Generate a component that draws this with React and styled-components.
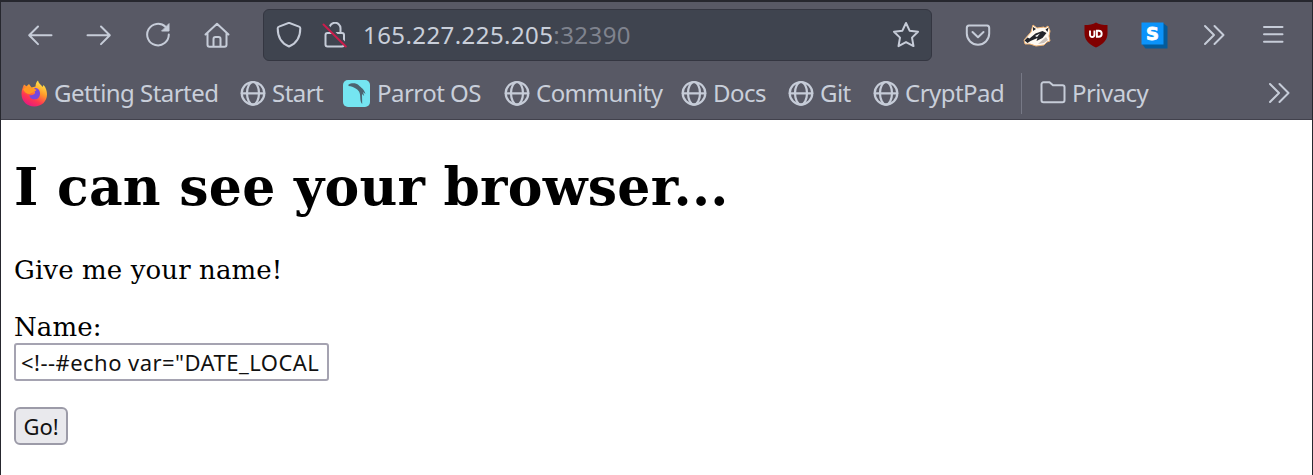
import React from "react";
import styled, { createGlobalStyle } from "styled-components";

const GlobalStyle = createGlobalStyle`
  * { box-sizing: border-box; }
  html, body { margin: 0; padding: 0; background: #fff; overflow: hidden; }
`;

const Window = styled.div`
  width: 1313px;
  height: 475px;
  border: 1px solid #26272e;
  border-top-width: 2px;
  border-bottom: 0;
  background: #fff;
`;

const Chrome = styled.header`
  height: 118px;
  background: #585965;
  border-bottom: 1px solid #41414c;
  color: #c9cfda;
  font-family: "Noto Sans", "Open Sans", sans-serif;
`;

const NavBar = styled.nav`
  display: flex;
  align-items: center;
  height: 66px;
  padding-left: 9px;
`;

const NavButton = styled.span`
  display: flex;
  align-items: center;
  justify-content: center;
  flex: none;
  width: 59px;
  height: 52px;
`;

const AddressBar = styled.div`
  display: flex;
  align-items: center;
  flex: none;
  width: 669px;
  height: 52px;
  margin: 0 16px 0 17px;
  padding: 0 11px 0 12px;
  border: 1px solid #343641;
  border-radius: 6px;
  background: #3f444f;
`;

const LockSlot = styled.span`
  display: flex;
  flex: none;
  margin-left: 20px;
`;

const Address = styled.span`
  flex: 1;
  margin-left: 15px;
  font-size: 24px;
  line-height: 34px;
  letter-spacing: 0.42px;
  white-space: nowrap;
`;

const Port = styled.span`
  color: #7f838e;
`;

const Bookmarks = styled.nav`
  display: flex;
  align-items: center;
  height: 50px;
  padding: 0 21px 0 20px;
`;

const Bookmark = styled.span`
  display: flex;
  align-items: center;
  flex: none;
  gap: ${(p) => p.$gap || 6}px;
  width: ${(p) => p.$width}px;
`;

const BookmarkLabel = styled.span`
  font-size: 24px;
  line-height: 34px;
  letter-spacing: -0.54px;
  white-space: nowrap;
`;

const Divider = styled.span`
  flex: none;
  width: 1px;
  height: 41px;
  margin-right: 18px;
  background: #777986;
`;

const Spacer = styled.span`
  flex: 1;
`;

const Page = styled.main`
  padding: 0 13px;
  color: #000;
  font-family: "DejaVu Serif", serif;
  font-size: 26px;
  line-height: 30px;
  letter-spacing: 0.12px;
`;

const Title = styled.h1`
  margin: 0;
  padding-top: 37px;
  font-size: 52px;
  line-height: 60px;
  font-weight: bold;
  letter-spacing: 0.27px;
`;

const Prompt = styled.p`
  margin: 38px 0 0;
`;

const Form = styled.form`
  display: flex;
  flex-direction: column;
  align-items: flex-start;
  margin-top: 27px;
`;

const NameInput = styled.input`
  width: 315px;
  height: 38px;
  margin-top: 1px;
  padding: 0 5px;
  border: 2px solid #a5a3b1;
  border-radius: 3px;
  background: #fff;
  color: #111;
  font: 22px "Noto Sans", sans-serif;
  letter-spacing: 0.46px;
  outline: none;
`;

const GoButton = styled.button`
  width: 54px;
  height: 38px;
  margin-top: 26px;
  padding: 0;
  border: 2px solid #9c9ba8;
  border-radius: 6px;
  background: #e9e9ed;
  color: #111;
  font: 22px "Noto Sans", sans-serif;
`;

const Line = ({ w = 26, h = 26, sw = 2, children }) => (
  <svg width={w} height={h} viewBox={`0 0 ${w} ${h}`} fill="none" stroke="#c6ccd8" strokeWidth={sw} strokeLinecap="round" strokeLinejoin="round">
    {children}
  </svg>
);

const Back = () => <Line><path d="M24.5 13.3H2.500M11 4.500L2.200 13.300l8.800 8.800" /></Line>;
const Forward = () => <Line><path d="M1.5 13.3H23.500M15 4.500l8.800 8.800-8.800 8.800" /></Line>;
const Reload = () => (
  <Line>
    <path d="M20.500 4.800A10.800 10.800 0 1 0 23.800 12.500" />
    <path d="M24 2v7h-7z" fill="#c6ccd8" strokeWidth="1" />
  </Line>
);
const Home = () => (
  <Line>
    <path d="M1.500 12.500L13 1.800 24.500 12.500M3.500 11V22.700a2 2 0 0 0 2 2h15a2 2 0 0 0 2-2V11M9.500 24.500v-7.500a2 2 0 0 1 2-2h3a2 2 0 0 1 2 2v7.500" />
  </Line>
);
const Shield = () => (
  <Line><path d="M13 .8L23 4.600c.8.3 1.300.9 1.300 1.700C24.300 15.500 20.500 21.500 13 24.500 5.500 21.500 1.700 15.500 1.700 6.300c0-.8.4-1.400 1.300-1.700z" /></Line>
);
const Lock = () => (
  <Line>
    <path d="M7.500 6.500a5.500 5.500 0 0 1 11-.5v5" />
    <rect x="3.500" y="11" width="18.500" height="13.500" rx="2" />
    <path d="M3.500 2L25 23.500" stroke="#3f444f" strokeWidth="3" />
    <path d="M1.500 2.500L23.800 24.500" stroke="#cb1c4b" />
  </Line>
);
const Star = () => (
  <Line w={28} h={28}>
    <path d="M14 2l3.600 7.700 8.400 1.100-6 5.800 1.500 8.500-7.500-4-7.500 4 1.500-8.500-6-5.800 8.400-1.100z" />
  </Line>
);
const Pocket = () => (
  <Line>
    <path d="M4 3.500h18a2.500 2.500 0 0 1 2.200 2.500v5.500a11.200 11.200 0 0 1-22.400 0V6A2.500 2.500 0 0 1 4 3.500z" />
    <path d="M7.500 10L13 15.300l5.500-5.300" />
  </Line>
);
const Chevrons = () => (
  <Line w={24} h={24}><path d="M3 3l9 9-9 9M12.500 3l9 9-9 9" /></Line>
);
const Menu = () => <Line><path d="M4 5h18.500M4 12.300h18.500M4 19.700h18.500" /></Line>;
const Globe = () => (
  <Line sw={2.2}>
    <circle cx="13" cy="13.300" r="11.300" />
    <ellipse cx="13" cy="13.300" rx="6" ry="11.300" />
    <path d="M1.700 13.300h22.600" />
  </Line>
);
const Folder = () => (
  <Line>
    <path d="M1.500 20.300v-16a2 2 0 0 1 2-2h6l3.500 3h9.500a2 2 0 0 1 2 2v13a2 2 0 0 1-2 2h-19a2 2 0 0 1-2-2z" />
  </Line>
);
const Firefox = () => (
  <svg width="27" height="27" viewBox="0 0 27 27">
    <defs>
      <linearGradient id="flame" x1="0.8" y1="0" x2="0.25" y2="1">
        <stop offset="0" stopColor="#fff44f" />
        <stop offset=".4" stopColor="#ff9a2a" />
        <stop offset=".7" stopColor="#ff3750" />
        <stop offset="1" stopColor="#e31587" />
      </linearGradient>
    </defs>
    <path d="M3 4.500l2.500 1.700L8 4l2.500 3.500 4-1c0-2.500 1-4.800 2.500-6C17.500 3.500 20 4.500 21.500 7L22.500 5c2.500 2.500 3.500 6 3.500 9.500C26 21.500 20.500 26.500 13.300 26.500S.5 21 .5 14c0-4 1.200-6.500 2.500-9.500z" fill="url(#flame)" />
    <path d="M13.500 8c3.500 0 5.500 2 5.500 5.500s-2 5.800-5.500 5.800S8.500 17 8.500 15c1.500.6 3 .4 4.500-.8 1-.7 1.500-2 .5-3z" fill="#7647dd" />
    <path d="M2 9C5 6 10 6.500 12 8.500l3.500 1.300c-.5 1.700-3 1.700-4 2.700L8.500 14C6 14 3 12 2 9z" fill="#ff9822" />
  </svg>
);
const Parrot = () => (
  <svg width="27" height="27" viewBox="0 0 27 27">
    <rect width="27" height="27" rx="5" fill="#75e5f1" />
    <path d="M5.500 4.500c3-2 8-1.500 10 .5 2.500 2.500 5.500 4 7 9l-2.500-2 1.200 4-2.200-2 .2 10c-3-3-1-9-3.200-12.500C14.500 9.500 11 6.500 5.500 6z" fill="#4c6470" />
  </svg>
);
const Badger = () => (
  <svg width="28" height="24" viewBox="0 0 28 24">
    <path d="M1 17L8 9l2-7 4 3 7-1 1 1 3-2 2 5-1 5 1 5-3 1-3 3-8 1-6-2H2z" fill="#fffaf2" stroke="#eeb272" strokeWidth="1" />
    <path d="M1.500 17.500l3-3 2 1 6-5 7-2.500 4 2-4 5-6 3 1-3-7 3-3 2zM10 4l3 2-3 2zM22.500 6.500l3-2-1 4.500z" fill="#22242a" />
    <path d="M12 13l5-2.500-3 3.500z" fill="#fff" />
    <path d="M15 21l8-7 2 3-4 3z" fill="#c9c0b9" />
  </svg>
);
const UBlock = () => (
  <svg width="24" height="26" viewBox="0 0 24 26">
    <path d="M12 .5c3 2 7 2.500 11.500 2.500v8c0 7-4 11-11.500 14.500C4.500 22 .5 18 .5 11V3C5 3 9 2.500 12 .5z" fill="#800000" />
    <path d="M6 8.500v4.300a2.200 2.200 0 0 0 4.400 0V8.500M12.900 8.800v6h1.800a3 3 0 0 0 0-6z" fill="none" stroke="#fff" strokeWidth="1.900" />
  </svg>
);
const Stylus = () => (
  <svg width="27" height="27" viewBox="0 0 27 27">
    <path d="M22 1l4.500 3.500v22H4.500L1 22z" fill="#045b9b" />
    <rect x=".5" y=".5" width="22" height="22" fill="#0b93fa" />
    <text x="11.500" y="17.800" textAnchor="middle" fill="#fff" stroke="#fff" strokeWidth=".8" fontFamily="DejaVu Sans" fontWeight="bold" fontSize="18">S</text>
  </svg>
);

const links = [
  { label: "Getting Started", width: 219, Icon: Firefox },
  { label: "Start", width: 103, Icon: Globe },
  { label: "Parrot OS", width: 161, Icon: Parrot, gap: 7 },
  { label: "Community", width: 177, Icon: Globe },
  { label: "Docs", width: 107, Icon: Globe },
  { label: "Git", width: 85, Icon: Globe },
  { label: "CryptPad", width: 148, Icon: Globe },
];

export default function App() {
  return (
    <>
      <GlobalStyle />
      <Window>
        <Chrome>
          <NavBar>
            <NavButton><Back /></NavButton>
            <NavButton><Forward /></NavButton>
            <NavButton><Reload /></NavButton>
            <NavButton><Home /></NavButton>
            <AddressBar>
              <Shield />
              <LockSlot><Lock /></LockSlot>
              <Address>165.227.225.205<Port>:32390</Port></Address>
              <Star />
            </AddressBar>
            <NavButton><Pocket /></NavButton>
            <NavButton><Badger /></NavButton>
            <NavButton><UBlock /></NavButton>
            <NavButton><Stylus /></NavButton>
            <NavButton><Chevrons /></NavButton>
            <NavButton><Menu /></NavButton>
          </NavBar>
          <Bookmarks>
            {links.map(({ label, width, Icon, gap }) => (
              <Bookmark key={label} $width={width} $gap={gap}>
                <Icon />
                <BookmarkLabel>{label}</BookmarkLabel>
              </Bookmark>
            ))}
            <Divider />
            <Bookmark $width={120}>
              <Folder />
              <BookmarkLabel>Privacy</BookmarkLabel>
            </Bookmark>
            <Spacer />
            <Chevrons />
          </Bookmarks>
        </Chrome>
        <Page>
          <Title>I can see your browser...</Title>
          <Prompt>Give me your name!</Prompt>
          <Form onSubmit={(e) => e.preventDefault()}>
            <label htmlFor="name">Name:</label>
            <NameInput id="name" defaultValue={'<!--#echo var="DATE_LOCAL'} />
            <GoButton>Go!</GoButton>
          </Form>
        </Page>
      </Window>
    </>
  );
}
